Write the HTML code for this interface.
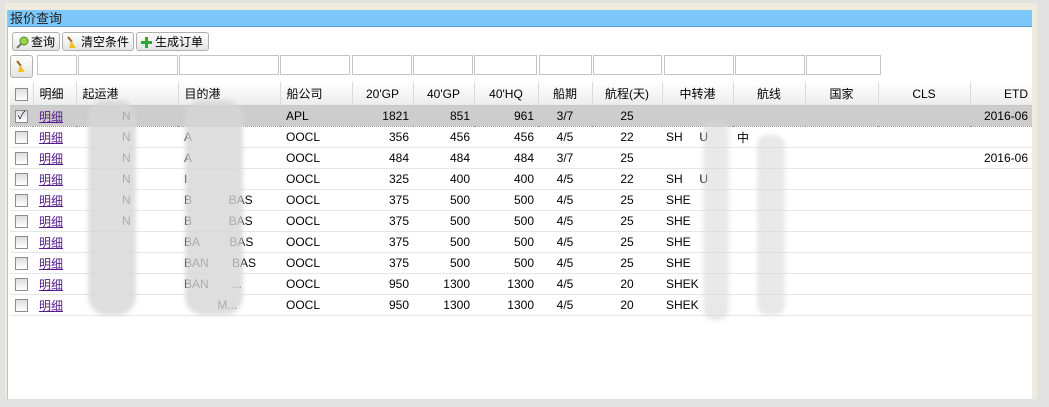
<!DOCTYPE html>
<html><head><meta charset="utf-8"><style>
body{margin:0;width:1049px;height:407px;background:#e2e2e2;position:relative;overflow:hidden;font-family:"Liberation Sans","Noto Sans CJK SC",sans-serif;font-size:12px;color:#000}
.frame{position:absolute;left:5px;top:3px;width:1032px;height:396px;background:#efebdd}
.panel{position:absolute;left:7px;top:10px;width:1024px;height:389px;background:#fff;border-left:1px solid #9cc8ea}
.title{position:absolute;left:0;top:0;width:1024px;height:17px;background:#7cc8fb;border-bottom:1px solid #5aa0d8;font-size:13px;line-height:17px;padding-left:2px;color:#222;box-sizing:border-box}
.btn{position:absolute;top:22px;height:19px;border:1px solid #b0b0b0;border-radius:3px;background:linear-gradient(#fff,#e4e4e4);line-height:19px;font-size:12px;padding-left:18px;box-sizing:border-box}
.ic{position:absolute;left:3px;top:3px;width:13px;height:13px}
.inp{position:absolute;top:45px;height:20px;border:1px solid #c4c4c4;box-sizing:border-box;background:#fff}
table{position:absolute;left:2px;top:72px;border-collapse:collapse;table-layout:fixed;width:1022px}
th{height:23px;font-weight:normal;background:linear-gradient(#fff,#ececec);border-right:1px solid #dadada;border-bottom:1px solid #c8c8c8;padding:0 4px;text-align:center;white-space:nowrap;overflow:hidden}
td{height:20px;border-bottom:1px solid #e6e6e6;padding:0 4px;white-space:nowrap;overflow:hidden}
tr.sel td{background:#cdcdcd;border-bottom:1px dotted #999}
td:nth-child(2),th:nth-child(2),td:nth-child(3),th:nth-child(3),td:nth-child(4),th:nth-child(4),td:nth-child(5),th:nth-child(5){padding-left:6px}
.r{text-align:right}.c{text-align:center}
a{color:#551a8b;text-decoration:underline}
.cb{display:inline-block;width:11px;height:11px;border:1px solid #8d8d8d;background:linear-gradient(#ddd,#fff);vertical-align:middle;position:relative}
.blob{position:absolute;background:#d6d6d6;filter:blur(2px);opacity:.8}
</style></head><body>
<div class="frame"></div>
<div class="panel">
<div class="title">报价查询</div>
<div class="btn" style="left:4px;width:48px"><svg class="ic" viewBox="0 0 13 13"><circle cx="8" cy="5" r="4" fill="#9ad44a" stroke="#4a8a20"/><line x1="5" y1="8" x2="1" y2="12" stroke="#777" stroke-width="2"/></svg>查询</div>
<div class="btn" style="left:54px;width:72px"><svg class="ic" viewBox="0 0 13 13"><line x1="2" y1="1" x2="6" y2="6" stroke="#a06020" stroke-width="2"/><path d="M5 5 L10 12 L3 12 Z" fill="#f0c020"/></svg>清空条件</div>
<div class="btn" style="left:128px;width:73px"><svg class="ic" viewBox="0 0 13 13"><path d="M5 1h3v4h4v3H8v4H5V8H1V5h4z" fill="#2ea82e"/></svg>生成订单</div>
<div class="btn" style="left:2px;top:45px;width:23px;height:23px;padding:0"><svg class="ic" style="left:4px;top:4px" viewBox="0 0 13 13"><line x1="2" y1="1" x2="6" y2="6" stroke="#a06020" stroke-width="2"/><path d="M5 5 L10 12 L3 12 Z" fill="#f0c020"/></svg></div>
<div class="inp" style="left:29px;width:40px"></div>
<div class="inp" style="left:70px;width:100px"></div>
<div class="inp" style="left:171px;width:100px"></div>
<div class="inp" style="left:272px;width:70px"></div>
<div class="inp" style="left:344px;width:60px"></div>
<div class="inp" style="left:405px;width:60px"></div>
<div class="inp" style="left:466px;width:63px"></div>
<div class="inp" style="left:531px;width:53px"></div>
<div class="inp" style="left:585px;width:69px"></div>
<div class="inp" style="left:656px;width:70px"></div>
<div class="inp" style="left:727px;width:70px"></div>
<div class="inp" style="left:798px;width:75px"></div>
<table>
<colgroup><col style="width:23px"><col style="width:43px"><col style="width:102px"><col style="width:102px"><col style="width:72px"><col style="width:61px"><col style="width:61px"><col style="width:64px"><col style="width:54px"><col style="width:70px"><col style="width:71px"><col style="width:72px"><col style="width:73px"><col style="width:92px"><col style="width:62px"></colgroup>
<tr><th><span class="cb"></span></th><th style="text-align:left">明细</th><th style="text-align:left">起运港</th><th style="text-align:left">目的港</th><th style="text-align:left">船公司</th><th>20'GP</th><th>40'GP</th><th>40'HQ</th><th>船期</th><th>航程(天)</th><th>中转港</th><th>航线</th><th>国家</th><th>CLS</th><th class="r" style="border-right:0">ETD</th></tr>
<tr class="sel"><td class="c"><span class="cb" style="color:#224;font-size:11px;line-height:10px">✓</span></td><td><a>明细</a></td><td>&nbsp; &nbsp; &nbsp; &nbsp; &nbsp; &nbsp; N</td><td></td><td>APL</td><td class="r">1821</td><td class="r">851</td><td class="r">961</td><td class="c">3/7</td><td class="c">25</td><td></td><td></td><td></td><td></td><td class="r">2016-06</td></tr>
<tr><td class="c"><span class="cb"></span></td><td><a>明细</a></td><td>&nbsp; &nbsp; &nbsp; &nbsp; &nbsp; &nbsp; N</td><td>A</td><td>OOCL</td><td class="r">356</td><td class="r">456</td><td class="r">456</td><td class="c">4/5</td><td class="c">22</td><td>SH &nbsp; &nbsp; U</td><td>中</td><td></td><td></td><td></td></tr>
<tr><td class="c"><span class="cb"></span></td><td><a>明细</a></td><td>&nbsp; &nbsp; &nbsp; &nbsp; &nbsp; &nbsp; N</td><td>A</td><td>OOCL</td><td class="r">484</td><td class="r">484</td><td class="r">484</td><td class="c">3/7</td><td class="c">25</td><td></td><td></td><td></td><td></td><td class="r">2016-06</td></tr>
<tr><td class="c"><span class="cb"></span></td><td><a>明细</a></td><td>&nbsp; &nbsp; &nbsp; &nbsp; &nbsp; &nbsp; N</td><td>I</td><td>OOCL</td><td class="r">325</td><td class="r">400</td><td class="r">400</td><td class="c">4/5</td><td class="c">22</td><td>SH &nbsp; &nbsp; U</td><td></td><td></td><td></td><td></td></tr>
<tr><td class="c"><span class="cb"></span></td><td><a>明细</a></td><td>&nbsp; &nbsp; &nbsp; &nbsp; &nbsp; &nbsp; N</td><td>B &nbsp; &nbsp; &nbsp; &nbsp; &nbsp; BAS</td><td>OOCL</td><td class="r">375</td><td class="r">500</td><td class="r">500</td><td class="c">4/5</td><td class="c">25</td><td>SHE</td><td></td><td></td><td></td><td></td></tr>
<tr><td class="c"><span class="cb"></span></td><td><a>明细</a></td><td>&nbsp; &nbsp; &nbsp; &nbsp; &nbsp; &nbsp; N</td><td>B &nbsp; &nbsp; &nbsp; &nbsp; &nbsp; BAS</td><td>OOCL</td><td class="r">375</td><td class="r">500</td><td class="r">500</td><td class="c">4/5</td><td class="c">25</td><td>SHE</td><td></td><td></td><td></td><td></td></tr>
<tr><td class="c"><span class="cb"></span></td><td><a>明细</a></td><td></td><td>BA &nbsp; &nbsp; &nbsp; &nbsp; BAS</td><td>OOCL</td><td class="r">375</td><td class="r">500</td><td class="r">500</td><td class="c">4/5</td><td class="c">25</td><td>SHE</td><td></td><td></td><td></td><td></td></tr>
<tr><td class="c"><span class="cb"></span></td><td><a>明细</a></td><td></td><td>BAN &nbsp; &nbsp; &nbsp; BAS</td><td>OOCL</td><td class="r">375</td><td class="r">500</td><td class="r">500</td><td class="c">4/5</td><td class="c">25</td><td>SHE</td><td></td><td></td><td></td><td></td></tr>
<tr><td class="c"><span class="cb"></span></td><td><a>明细</a></td><td></td><td>BAN &nbsp; &nbsp; &nbsp; ...</td><td>OOCL</td><td class="r">950</td><td class="r">1300</td><td class="r">1300</td><td class="c">4/5</td><td class="c">20</td><td>SHEK</td><td></td><td></td><td></td><td></td></tr>
<tr><td class="c"><span class="cb"></span></td><td><a>明细</a></td><td></td><td>&nbsp; &nbsp; &nbsp; &nbsp; &nbsp; M...</td><td>OOCL</td><td class="r">950</td><td class="r">1300</td><td class="r">1300</td><td class="c">4/5</td><td class="c">20</td><td>SHEK</td><td></td><td></td><td></td><td></td></tr>
</table>
</div>
<div class="blob" style="left:88px;top:100px;width:48px;height:215px;border-radius:18px"></div>
<div class="blob" style="left:185px;top:100px;width:58px;height:215px;border-radius:18px"></div>
<div class="blob" style="left:703px;top:120px;width:26px;height:200px;border-radius:10px;opacity:.55"></div>
<div class="blob" style="left:757px;top:135px;width:28px;height:180px;border-radius:10px;opacity:.55"></div>
</body></html>
